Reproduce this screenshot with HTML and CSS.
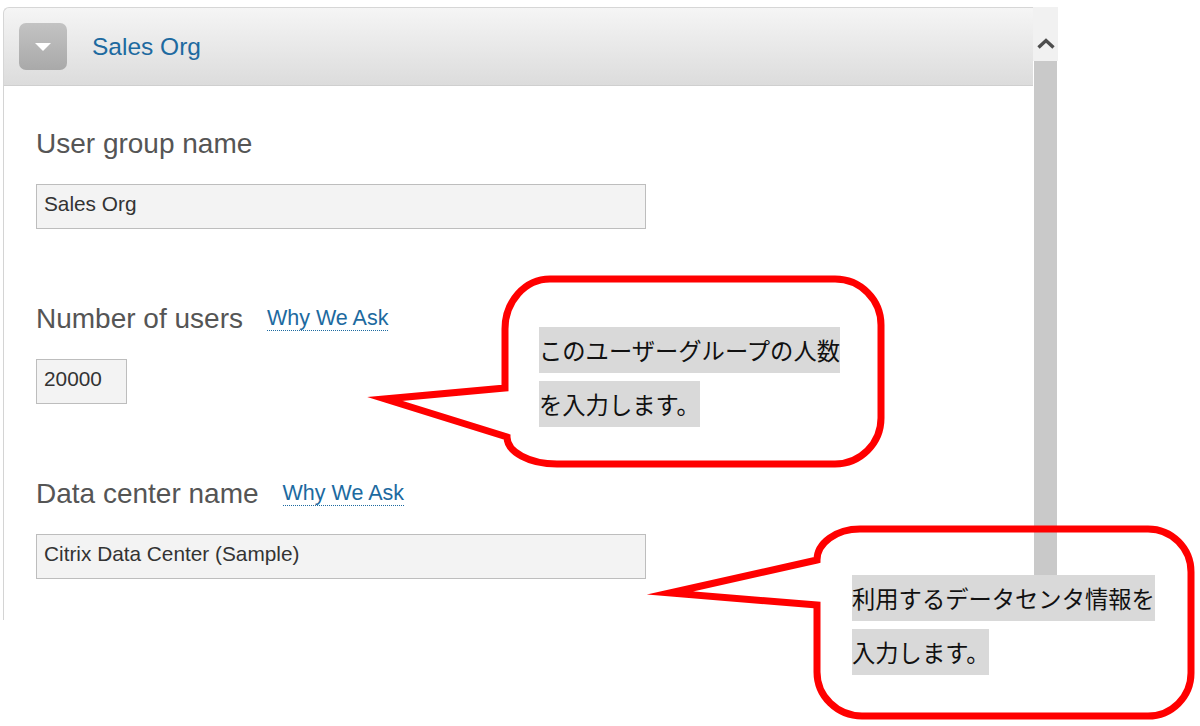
FILE: index.html
```html
<!DOCTYPE html>
<html lang="ja">
<head>
<meta charset="utf-8">
<title>Sales Org</title>
<link rel="stylesheet" href="styles.css">
</head>
<body>
<div class="page">
  <div class="panel">
    <div class="main">
      <div class="header">
        <div class="toggle">
          <svg width="16" height="8" viewBox="0 0 16 8"><polygon points="0,0 16,0 8,8" fill="#ffffff"/></svg>
        </div>
        <span class="title">Sales Org</span>
      </div>
      <div class="content">
        <div class="field">
          <div class="label-row"><span class="label">User group name</span></div>
          <div class="input wide">Sales Org</div>
        </div>
        <div class="field">
          <div class="label-row"><span class="label">Number of users</span><span class="why">Why We Ask</span></div>
          <div class="input narrow">20000</div>
        </div>
        <div class="field">
          <div class="label-row"><span class="label">Data center name</span><span class="why">Why We Ask</span></div>
          <div class="input wide">Citrix Data Center (Sample)</div>
        </div>
      </div>
    </div>
    <div class="scrollbar">
      <div class="sb-btn">
        <svg width="18" height="11" viewBox="0 0 18 11"><polyline points="1.5,9.5 9,2.5 16.5,9.5" fill="none" stroke="#4d4d4d" stroke-width="3.4"/></svg>
      </div>
      <div class="sb-thumb"></div>
    </div>
  </div>

  <svg class="bubbles" width="1200" height="726" viewBox="0 0 1200 726">
    <path d="M 505,388 L 385,399 L 507,437 A 50 27 0 0 0 557,464 L 835,464 A 46 46 0 0 0 881,418 L 881,325 A 46 46 0 0 0 835,279 L 550,279 A 45 50 0 0 0 505,329 Z" fill="none" stroke="#ff0000" stroke-width="7" stroke-linejoin="miter" stroke-miterlimit="10"/>
    <path d="M 817,560 L 670,593 L 817,605 L 817,672 A 45 44 0 0 0 862,716 L 1148,716 A 43 43 0 0 0 1191,673 L 1191,572 A 43 43 0 0 0 1148,529 L 860,529 A 43 31 0 0 0 817,560 Z" fill="none" stroke="#ff0000" stroke-width="7" stroke-linejoin="miter" stroke-miterlimit="10"/>
  </svg>

  <div class="callout callout-1">
    <div class="cl-line">このユーザーグループの人数</div>
    <div class="cl-line">を入力します。</div>
  </div>
  <div class="callout callout-2">
    <div class="cl-line">利用するデータセンタ情報を</div>
    <div class="cl-line">入力します。</div>
  </div>
</div>
</body>
</html>
```

FILE: styles.css
```css
html, body {
  margin: 0;
  padding: 0;
  background: #ffffff;
}

body {
  font-family: "Liberation Sans", Arial, sans-serif;
}

.page {
  position: relative;
  width: 1200px;
  height: 726px;
  box-sizing: border-box;
  padding: 7px 0 0 3px;
  overflow: hidden;
}

.panel {
  display: flex;
  width: 1055px;
  height: 613px;
}

.main {
  width: 1030px;
  display: flex;
  flex-direction: column;
}

.header {
  height: 79px;
  box-sizing: border-box;
  border: 1px solid #d6d6d6;
  border-right: none;
  border-bottom-color: #cfcfcf;
  border-radius: 6px 0 0 0;
  background: linear-gradient(#f5f5f5, #dcdcdc);
  display: flex;
  align-items: center;
  padding-left: 15px;
}

.toggle {
  width: 48px;
  height: 47px;
  border-radius: 7px;
  background: linear-gradient(#c3c3c3, #a9a9a9);
  display: flex;
  align-items: center;
  justify-content: center;
}

.toggle svg {
  display: block;
}

.title {
  margin-left: 25px;
  font-size: 24.5px;
  color: #1d6aa0;
}

.content {
  flex: 1;
  border-left: 1px solid #d4d4d4;
  padding: 42px 0 0 32px;
}

.field + .field {
  margin-top: 74px;
}

.label-row {
  display: flex;
  align-items: center;
  gap: 24px;
  height: 32px;
  margin-bottom: 24px;
}

.label {
  font-size: 28px;
  line-height: 32px;
  color: #555555;
}

.why {
  font-size: 21.5px;
  line-height: 23px;
  color: #1d6aa0;
  border-bottom: 1px dotted #1d6aa0;
}

.input {
  height: 45px;
  box-sizing: border-box;
  border: 1px solid #bdbdbd;
  background: #f3f3f3;
  padding: 7px 7px 0;
  font-size: 20.8px;
  line-height: 24px;
  color: #333333;
  white-space: nowrap;
}

.input.wide {
  width: 610px;
}

.input.narrow {
  width: 91px;
}

.scrollbar {
  width: 25px;
  display: flex;
  flex-direction: column;
}

.sb-btn {
  height: 54px;
  background: #f1f1f1;
  display: flex;
  justify-content: center;
  padding-top: 31px;
  box-sizing: border-box;
}

.sb-btn svg {
  display: block;
}

.sb-thumb {
  height: 515px;
  margin: 0 1px;
  background: #c9c9c9;
}

.bubbles {
  position: absolute;
  left: 0;
  top: 0;
  pointer-events: none;
}

.callout {
  position: absolute;
  display: flex;
  flex-direction: column;
  align-items: flex-start;
  gap: 8px;
  font-family: "Noto Sans CJK JP", "Noto Sans CJK SC", sans-serif;
  font-size: 23.3px;
  color: #111111;
}

.callout-1 {
  left: 539px;
  top: 327px;
}

.callout-2 {
  left: 852px;
  top: 575px;
}

.cl-line {
  background: #d9d9d9;
  height: 46px;
  line-height: 46px;
  white-space: nowrap;
}
```
